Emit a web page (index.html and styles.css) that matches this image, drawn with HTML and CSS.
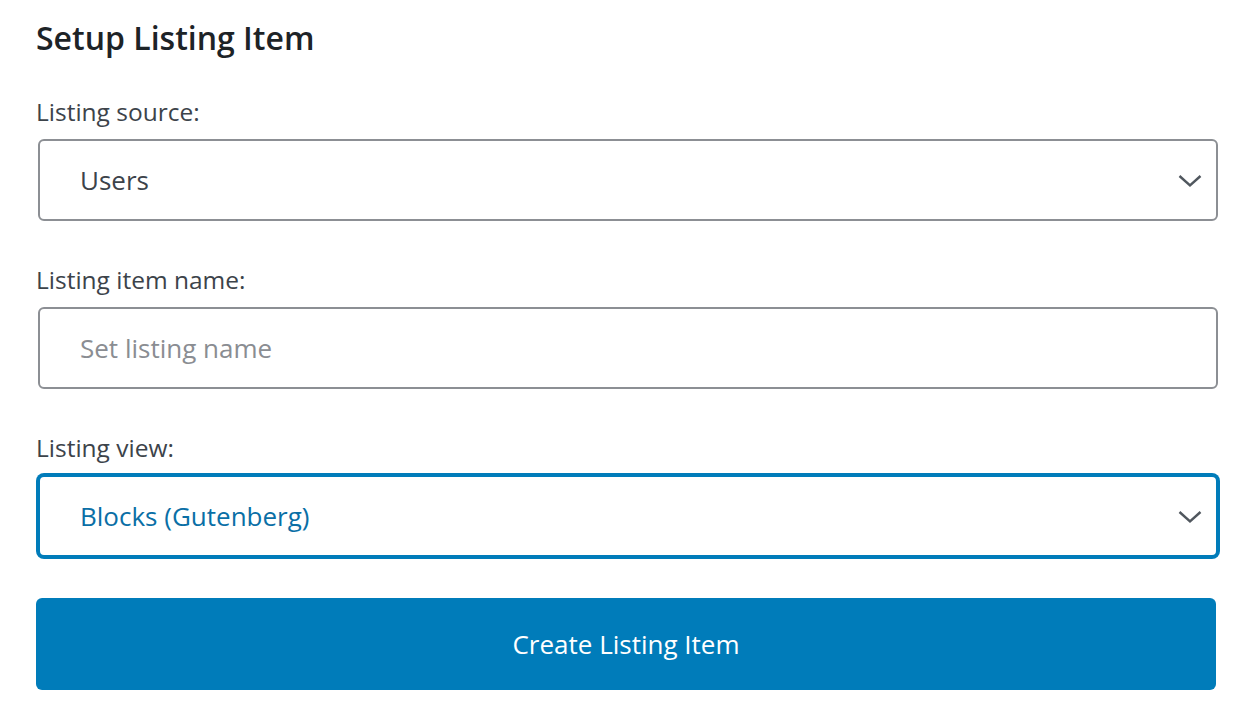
FILE: index.html
```html
<!DOCTYPE html>
<html lang="en">
<head>
    <meta charset="UTF-8">
    <meta name="viewport" content="width=device-width, initial-scale=1.0">
    <title>Setup Listing Item</title>
    <link rel="stylesheet" href="styles.css">
</head>
<body>
    <div class="setup">
        <h2 class="setup-title">Setup Listing Item</h2>

        <div class="field">
            <label class="field-label" for="source">Listing source:</label>
            <div class="select-wrap">
                <select id="source" class="control">
                    <option>Users</option>
                </select>
                <svg class="chevron" viewBox="0 0 24 24" width="24" height="24"><path d="M1.5 7l10.5 9.5 10.5-9.5" fill="none" stroke="#50575e" stroke-width="2.4"/></svg>
            </div>
        </div>

        <div class="field">
            <label class="field-label" for="name">Listing item name:</label>
            <input id="name" class="control" type="text" placeholder="Set listing name">
        </div>

        <div class="field">
            <label class="field-label" for="view">Listing view:</label>
            <div class="select-wrap">
                <select id="view" class="control focused">
                    <option>Blocks (Gutenberg)</option>
                </select>
                <svg class="chevron" viewBox="0 0 24 24" width="24" height="24"><path d="M1.5 7l10.5 9.5 10.5-9.5" fill="none" stroke="#50575e" stroke-width="2.4"/></svg>
            </div>
        </div>

        <button class="create-btn">Create Listing Item</button>
    </div>
</body>
</html>
```

FILE: styles.css
```css
body {
    margin: 0;
    padding: 0;
    background: #fff;
    font-family: "Open Sans", "Noto Sans", sans-serif;
    color: #3c434a;
}

.setup {
    width: 1184px;
    padding: 18px 0 0 36px;
}

.setup-title {
    margin: 0 0 38px;
    font-size: 32px;
    line-height: 40px;
    font-weight: 600;
    color: #1d2327;
}

.field {
    margin-bottom: 43px;
}

.field-label {
    display: block;
    margin-bottom: 11px;
    font-size: 24.5px;
    line-height: 32px;
    color: #3c434a;
}

.select-wrap {
    position: relative;
}

.control {
    display: block;
    box-sizing: border-box;
    width: 1180px;
    height: 82px;
    margin-left: 2px;
    padding: 0 40px;
    border: 2px solid #8c8f94;
    border-radius: 6px;
    background: #fff;
    font-family: inherit;
    font-size: 26px;
    color: #3c434a;
    outline: none;
    -webkit-appearance: none;
    appearance: none;
}

.control::placeholder {
    color: #8a8d92;
}

.control.focused {
    border-color: #007cba;
    box-shadow: 0 0 0 2px #007cba;
    color: #0a6fa6;
}

.chevron {
    position: absolute;
    right: 18px;
    top: 30px;
    pointer-events: none;
}

.create-btn {
    display: block;
    width: 1180px;
    height: 92px;
    margin-top: -2px;
    border: none;
    border-radius: 6px;
    background: #007cba;
    color: #fff;
    font-family: inherit;
    font-size: 26px;
    cursor: pointer;
}
```
